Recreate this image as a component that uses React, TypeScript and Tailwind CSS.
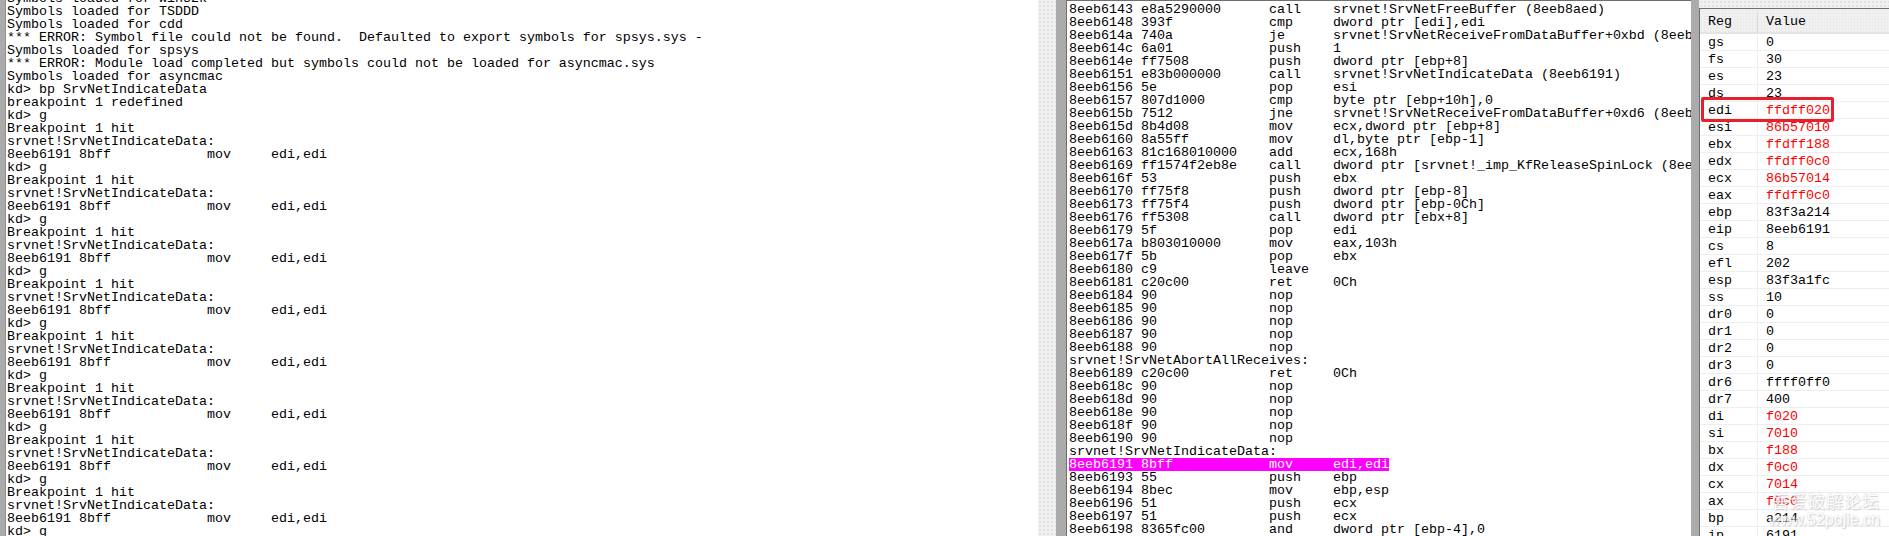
const mono = { fontFamily: '"Liberation Mono", "Noto Sans CJK SC", monospace' };

const breakHit = ['Breakpoint 1 hit', 'srvnet!SrvNetIndicateData:', '8eeb6191 8bff            mov     edi,edi', 'kd> g'];

const commandLines = [
  'Symbols loaded for win32k',
  'Symbols loaded for TSDDD',
  'Symbols loaded for cdd',
  '*** ERROR: Symbol file could not be found.  Defaulted to export symbols for spsys.sys - ',
  'Symbols loaded for spsys',
  '*** ERROR: Module load completed but symbols could not be loaded for asyncmac.sys',
  'Symbols loaded for asyncmac',
  'kd> bp SrvNetIndicateData',
  'breakpoint 1 redefined',
  'kd> g',
  ...breakHit,
  ...breakHit,
  ...breakHit,
  ...breakHit,
  ...breakHit,
  ...breakHit,
  ...breakHit,
  ...breakHit,
];

const asm = [
  ['8eeb6143', 'e8a5290000', 'call', 'srvnet!SrvNetFreeBuffer (8eeb8aed)'],
  ['8eeb6148', '393f', 'cmp', 'dword ptr [edi],edi'],
  ['8eeb614a', '740a', 'je', 'srvnet!SrvNetReceiveFromDataBuffer+0xbd (8eeb6156)'],
  ['8eeb614c', '6a01', 'push', '1'],
  ['8eeb614e', 'ff7508', 'push', 'dword ptr [ebp+8]'],
  ['8eeb6151', 'e83b000000', 'call', 'srvnet!SrvNetIndicateData (8eeb6191)'],
  ['8eeb6156', '5e', 'pop', 'esi'],
  ['8eeb6157', '807d1000', 'cmp', 'byte ptr [ebp+10h],0'],
  ['8eeb615b', '7512', 'jne', 'srvnet!SrvNetReceiveFromDataBuffer+0xd6 (8eeb616f)'],
  ['8eeb615d', '8b4d08', 'mov', 'ecx,dword ptr [ebp+8]'],
  ['8eeb6160', '8a55ff', 'mov', 'dl,byte ptr [ebp-1]'],
  ['8eeb6163', '81c168010000', 'add', 'ecx,168h'],
  ['8eeb6169', 'ff1574f2eb8e', 'call', 'dword ptr [srvnet!_imp_KfReleaseSpinLock (8eebf274)]'],
  ['8eeb616f', '53', 'push', 'ebx'],
  ['8eeb6170', 'ff75f8', 'push', 'dword ptr [ebp-8]'],
  ['8eeb6173', 'ff75f4', 'push', 'dword ptr [ebp-0Ch]'],
  ['8eeb6176', 'ff5308', 'call', 'dword ptr [ebx+8]'],
  ['8eeb6179', '5f', 'pop', 'edi'],
  ['8eeb617a', 'b803010000', 'mov', 'eax,103h'],
  ['8eeb617f', '5b', 'pop', 'ebx'],
  ['8eeb6180', 'c9', 'leave', ''],
  ['8eeb6181', 'c20c00', 'ret', '0Ch'],
  ['8eeb6184', '90', 'nop', ''],
  ['8eeb6185', '90', 'nop', ''],
  ['8eeb6186', '90', 'nop', ''],
  ['8eeb6187', '90', 'nop', ''],
  ['8eeb6188', '90', 'nop', ''],
  ['srvnet!SrvNetAbortAllReceives:'],
  ['8eeb6189', 'c20c00', 'ret', '0Ch'],
  ['8eeb618c', '90', 'nop', ''],
  ['8eeb618d', '90', 'nop', ''],
  ['8eeb618e', '90', 'nop', ''],
  ['8eeb618f', '90', 'nop', ''],
  ['8eeb6190', '90', 'nop', ''],
  ['srvnet!SrvNetIndicateData:'],
  ['8eeb6191', '8bff', 'mov', 'edi,edi'],
  ['8eeb6193', '55', 'push', 'ebp'],
  ['8eeb6194', '8bec', 'mov', 'ebp,esp'],
  ['8eeb6196', '51', 'push', 'ecx'],
  ['8eeb6197', '51', 'push', 'ecx'],
  ['8eeb6198', '8365fc00', 'and', 'dword ptr [ebp-4],0'],
];

const regs: [string, string, boolean?][] = [
  ['gs', '0'],
  ['fs', '30'],
  ['es', '23'],
  ['ds', '23'],
  ['edi', 'ffdff020', true],
  ['esi', '86b57010', true],
  ['ebx', 'ffdff188', true],
  ['edx', 'ffdff0c0', true],
  ['ecx', '86b57014', true],
  ['eax', 'ffdff0c0', true],
  ['ebp', '83f3a214'],
  ['eip', '8eeb6191'],
  ['cs', '8'],
  ['efl', '202'],
  ['esp', '83f3a1fc'],
  ['ss', '10'],
  ['dr0', '0'],
  ['dr1', '0'],
  ['dr2', '0'],
  ['dr3', '0'],
  ['dr6', 'ffff0ff0'],
  ['dr7', '400'],
  ['di', 'f020', true],
  ['si', '7010', true],
  ['bx', 'f188', true],
  ['dx', 'f0c0', true],
  ['cx', '7014', true],
  ['ax', 'f0c0', true],
  ['bp', 'a214'],
  ['ip', '6191'],
];

const asmLine = (row: string[]) =>
  row.length === 1 ? row[0] : `${row[0]} ${row[1].padEnd(15)} ${row[2].padEnd(7)} ${row[3]}`;

export default function App() {
  return (
    <div className="relative flex h-[536px] w-[1889px] overflow-hidden bg-white text-[13.33px] text-black" style={mono}>
      <div className="w-[6px] shrink-0 border-r border-[#8f8f8f] bg-[#ababab]" />

      {/* command window */}
      <div className="w-[1032px] shrink-0 overflow-hidden pl-px">
        <div className="-mt-[8px] whitespace-pre leading-[13px]">
          {commandLines.map((line, i) => (
            <div key={i} className="h-[13px]">{line}</div>
          ))}
        </div>
      </div>

      <div className="w-[18px] shrink-0 bg-[#f0f0f0] bg-[radial-gradient(#e2e2e2_1px,transparent_1px)] bg-size-[4px_4px]" />
      <div className="w-[10px] shrink-0 bg-[#ababab]" />

      {/* disassembly */}
      <div className="w-[625px] shrink-0 overflow-hidden border-t border-l border-[#6f6f6f] pt-[2px] pl-[2px]">
        <div className="whitespace-pre leading-[13px]">
          {asm.map((row, i) => (
            <div key={i} className="h-[13px]">
              {row[0] === '8eeb6191' ? (
                <span className="inline-block h-[13px] bg-[#ff00ff] text-white">{asmLine(row)}</span>
              ) : (
                asmLine(row)
              )}
            </div>
          ))}
        </div>
      </div>

      <div className="w-[8px] shrink-0 bg-[#ababab]" />

      {/* registers */}
      <div className="flex min-w-0 flex-1 flex-col bg-[#f0f0f0]">
        <div className="h-[8px] shrink-0 bg-[radial-gradient(#e2e2e2_1px,transparent_1px)] bg-size-[4px_4px]" />
        <div className="flex-1 border-t border-l border-[#6f6f6f] bg-white">
          <div className="flex h-[25px] items-center border-b-2 border-[#e4e4e4] bg-[#f0f0f0] bg-[radial-gradient(#e2e2e2_1px,transparent_1px)] bg-size-[3px_3px] pt-[3px]">
            <div className="w-[58px] shrink-0 border-r border-[#d8d8d8] pl-[8px]">Reg</div>
            <div className="pl-[8px]">Value</div>
          </div>
          {regs.map(([name, value, changed]) => (
            <div key={name} className="flex h-[17px] items-center border-b border-[#eeeeee]">
              <div className="flex h-full w-[58px] shrink-0 items-center border-r border-[#eeeeee] pt-[2px] pl-[8px]">{name}</div>
              <div className={`pt-[2px] pl-[8px] ${changed ? 'text-[#ff0000]' : ''}`}>{value}</div>
            </div>
          ))}
        </div>
      </div>

      {/* annotation over the edi row */}
      <div className="absolute top-[97px] left-[1701px] h-[25px] w-[133px] rounded-[2px] border-[3px] border-[#e8202e]" />

      {/* forum watermark */}
      <div className="absolute top-[490px] right-[9px] flex flex-col items-end text-white opacity-75 [text-shadow:0_0_2px_#b8b8b8,1px_1px_1px_#c4c4c4]">
        <div className="text-[17px] leading-[21px] tracking-[1px]" style={{ fontFamily: '"Noto Sans CJK SC", sans-serif' }}>吾爱破解论坛</div>
        <div className="text-[16px] leading-[18px]" style={{ fontFamily: '"Liberation Sans", sans-serif' }}>www.52pojie.cn</div>
      </div>
    </div>
  );
}
